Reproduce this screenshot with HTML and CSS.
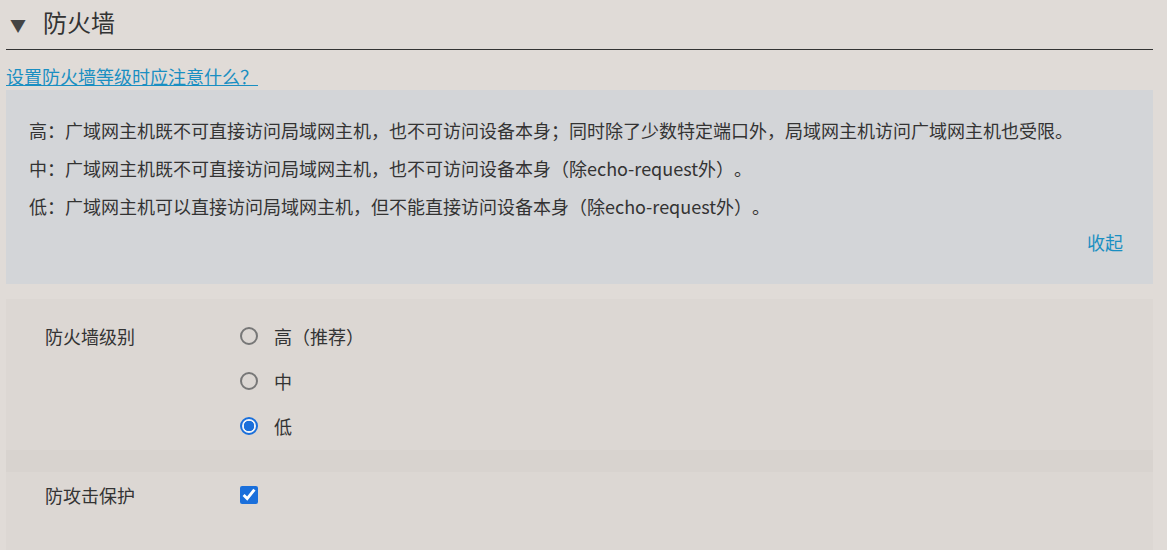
FILE: index.html
```html
<!DOCTYPE html>
<html lang="zh-CN">
<head>
    <meta charset="UTF-8">
    <title>防火墙</title>
    <link rel="stylesheet" href="styles.css">
</head>
<body>
    <div class="page">
        <!-- Section title -->
        <div class="section-head">
            <span class="caret">&#9660;</span>
            <h2>防火墙</h2>
        </div>

        <a class="help-link" href="#">设置防火墙等级时应注意什么？ </a>

        <!-- Help text -->
        <div class="help-box">
            <p>高：广域网主机既不可直接访问局域网主机，也不可访问设备本身；同时除了少数特定端口外，局域网主机访问广域网主机也受限。</p>
            <p>中：广域网主机既不可直接访问局域网主机，也不可访问设备本身（除echo-request外）。</p>
            <p>低：广域网主机可以直接访问局域网主机，但不能直接访问设备本身（除echo-request外）。</p>
            <div class="collapse"><a href="#">收起</a></div>
        </div>

        <!-- Settings -->
        <form class="settings">
            <div class="row">
                <div class="label">防火墙级别</div>
                <div class="options">
                    <label class="opt"><input type="radio" name="level"> 高（推荐）</label>
                    <label class="opt"><input type="radio" name="level"> 中</label>
                    <label class="opt"><input type="radio" name="level" checked> 低</label>
                </div>
            </div>
            <div class="divider"></div>
            <div class="row row-check">
                <div class="label">防攻击保护</div>
                <div class="options">
                    <label class="opt"><input type="checkbox" checked></label>
                </div>
            </div>
        </form>
    </div>
</body>
</html>
```

FILE: styles.css
```css
* {
    margin: 0;
    padding: 0;
    box-sizing: border-box;
}

body {
    font-family: 'Noto Sans CJK SC', 'Noto Sans', sans-serif;
    background: #e0dbd7;
    color: #333;
    font-size: 18px;
    text-spacing-trim: space-all;
}

.page {
    padding: 0 14px 0 6px;
}

.section-head {
    display: flex;
    align-items: center;
    height: 50px;
    border-bottom: 1px solid #333;
    padding-left: 4px;
}

.section-head .caret {
    font-size: 16px;
    width: 33px;
    color: #444;
}

.section-head h2 {
    font-size: 24px;
    font-weight: normal;
    line-height: 1;
    margin-top: -6px;
}

.help-link {
    display: inline-block;
    color: #1a8fc2;
    font-size: 18px;
    line-height: 24px;
    margin-top: 14px;
    margin-bottom: 2px;
}

.help-box {
    background: #d3d5d8;
    padding: 21px 30px 20px 23px;
    height: 194px;
}

.help-box p {
    line-height: 38px;
}

.help-box .collapse {
    text-align: right;
    line-height: 38px;
    margin-top: -2px;
}

.help-box .collapse a {
    color: #1a8fc2;
    text-decoration: none;
}

.settings {
    background: #dcd7d3;
    margin-top: 15px;
    height: 260px;
}

.row {
    display: flex;
    padding: 22px 0 9px 39px;
}

.row-check {
    padding-top: 8px;
}

.row .label {
    width: 194px;
    line-height: 30px;
}

.options {
    display: flex;
    flex-direction: column;
    gap: 15px;
}

.opt {
    display: flex;
    align-items: center;
    gap: 16px;
    height: 30px;
}

.opt input {
    width: 18px;
    height: 18px;
    margin: 0 0 0 1px;
    accent-color: #1a6fdb;
}

.opt input[type="radio"] {
    appearance: none;
    border: 2px solid #777;
    border-radius: 50%;
    background: transparent;
}

.opt input[type="radio"]:checked {
    border: 2px solid #1a6fdb;
    background: radial-gradient(circle, #1a6fdb 0 5px, #eef2f8 5.5px);
}

.divider {
    height: 22px;
    background: #d8d3cf;
}
```
